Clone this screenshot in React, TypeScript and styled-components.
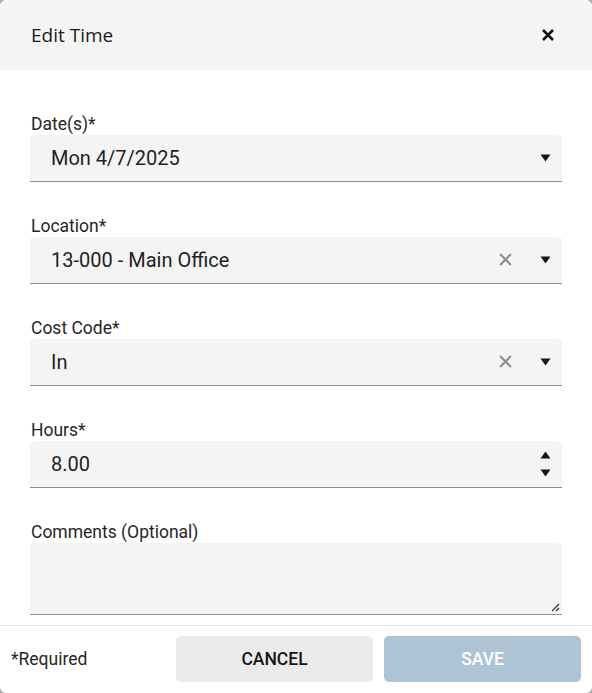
import React from "react";
import styled, { createGlobalStyle } from "styled-components";

const Global = createGlobalStyle`
  html, body { margin: 0; padding: 0; background: #a8a8a8; }
  body { font-family: Roboto, "Liberation Sans", sans-serif; color: #161616; }
  * { box-sizing: border-box; }
`;

const Dialog = styled.div`
  width: 592px;
  height: 693px;
  background: #ffffff;
  border-radius: 6px;
  overflow: hidden;
  display: flex;
  flex-direction: column;
`;

const Header = styled.header`
  height: 70px;
  background: #f4f4f4;
  display: flex;
  align-items: center;
  justify-content: space-between;
  padding: 0 36px 0 31px;
`;

const Title = styled.h2`
  margin: 0;
  font-family: "Open Sans", "Noto Sans", sans-serif;
  font-weight: 400;
  font-size: 19px;
  color: #1a1a1a;
`;

const IconButton = styled.button`
  border: 0;
  background: transparent;
  padding: 0;
  width: 16px;
  height: 16px;
  display: flex;
  align-items: center;
  justify-content: center;
  color: #161616;
`;

const Body = styled.div`
  flex: 1;
  padding: 44px 30px 0 30px;
  display: flex;
  flex-direction: column;
  gap: 34px;
`;

const Group = styled.div`
  display: flex;
  flex-direction: column;
  gap: 1px;
`;

const Label = styled.label`
  font-size: 17.5px;
  line-height: 20px;
  color: #262626;
  padding-left: 1px;
`;

const Field = styled.div<{ $tall?: boolean }>`
  height: ${(p) => (p.$tall ? "72px" : "47px")};
  background: #f4f4f4;
  border-bottom: 1px solid #8d8d8d;
  border-radius: 4px 4px 0 0;
  display: flex;
  align-items: ${(p) => (p.$tall ? "stretch" : "center")};
  padding: 0 11px 0 21px;
  position: relative;
`;

const Value = styled.span`
  flex: 1;
  font-size: 20px;
  color: #1f1f1f;
  padding-top: 0px;
`;

const ClearIcon = styled.span`
  width: 14px;
  height: 14px;
  display: flex;
  margin-right: 26px;
  color: #8d8d8d;
`;

const Caret = styled.span`
  width: 12px;
  height: 12px;
  display: flex;
  align-items: center;
  justify-content: center;
`;

const Spinner = styled.span`
  display: flex;
  flex-direction: column;
  gap: 10px;
  align-items: center;
  width: 12px;
`;

const Resize = styled.span`
  position: absolute;
  right: 2px;
  bottom: 2px;
  width: 9px;
  height: 9px;
  display: flex;
`;

const Footer = styled.footer`
  border-top: 1px solid #e0e0e0;
  height: 68px;
  padding: 10px 11px 11px 11px;
  display: flex;
  align-items: stretch;
  gap: 11px;
`;

const Required = styled.span`
  flex: 1;
  align-self: center;
  font-size: 17.5px;
  color: #262626;
`;

const Button = styled.button<{ $primary?: boolean }>`
  width: 197px;
  border: 0;
  border-radius: 5px;
  font-family: Roboto, sans-serif;
  font-weight: 500;
  font-size: 17.5px;
  letter-spacing: 0;
  text-transform: uppercase;
  background: ${(p) => (p.$primary ? "#aec3d3" : "#ebebeb")};
  color: ${(p) => (p.$primary ? "#ffffff" : "#161616")};
`;

const DownTri = () => (
  <svg width="11" height="8" viewBox="0 0 11 8">
    <path d="M0.5 0.5 L10.5 0.5 L5.5 7.5 Z" fill="#161616" />
  </svg>
);
const UpTri = () => (
  <svg width="11" height="8" viewBox="0 0 11 8">
    <path d="M0.5 7.5 L10.5 7.5 L5.5 0.5 Z" fill="#161616" />
  </svg>
);
const XIcon = ({ w = 2, size = 12 }: { w?: number; size?: number }) => (
  <svg width={size} height={size} viewBox="0 0 12 12">
    <path d="M1 1 L11 11 M11 1 L1 11" stroke="currentColor" strokeWidth={w} />
  </svg>
);

export default function App() {
  return (
    <>
      <Global />
      <Dialog>
        <Header>
          <Title>Edit Time</Title>
          <IconButton aria-label="close">
            <XIcon w={2.6} size={12} />
          </IconButton>
        </Header>
        <Body>
          <Group>
            <Label>Date(s)*</Label>
            <Field>
              <Value>Mon 4/7/2025</Value>
              <Caret><DownTri /></Caret>
            </Field>
          </Group>
          <Group>
            <Label>Location*</Label>
            <Field>
              <Value>13-000 - Main Office</Value>
              <ClearIcon><XIcon w={2} size={13} /></ClearIcon>
              <Caret><DownTri /></Caret>
            </Field>
          </Group>
          <Group>
            <Label>Cost Code*</Label>
            <Field>
              <Value>In</Value>
              <ClearIcon><XIcon w={2} size={13} /></ClearIcon>
              <Caret><DownTri /></Caret>
            </Field>
          </Group>
          <Group>
            <Label>Hours*</Label>
            <Field>
              <Value>8.00</Value>
              <Spinner>
                <UpTri />
                <DownTri />
              </Spinner>
            </Field>
          </Group>
          <Group>
            <Label>Comments (Optional)</Label>
            <Field $tall>
              <Resize>
                <svg width="9" height="9" viewBox="0 0 9 9">
                  <path d="M1 8 L8 1 M5 8 L8 5" stroke="#333" strokeWidth="1.2" />
                </svg>
              </Resize>
            </Field>
          </Group>
        </Body>
        <Footer>
          <Required>*Required</Required>
          <Button>Cancel</Button>
          <Button $primary>Save</Button>
        </Footer>
      </Dialog>
    </>
  );
}
